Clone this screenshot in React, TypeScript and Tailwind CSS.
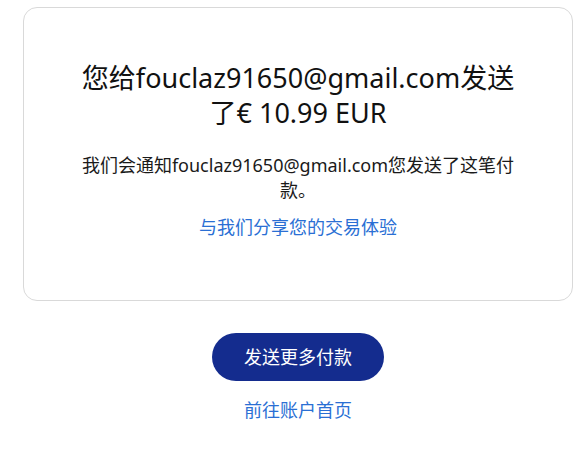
import React from "react";

const font = { fontFamily: '"Noto Sans", "Noto Sans CJK SC", sans-serif' };

export default function App() {
  return (
    <main className="bg-white min-h-screen w-[585px] h-[454px] overflow-hidden" style={font}>
      <div className="pl-[23px] pr-[12px] pt-[7px]">
        {/* confirmation card */}
        <section className="border border-[#d9d9d9] rounded-[14px] h-[294px] flex flex-col items-center pt-[52px] px-8">
          <h1 className="text-[27px] leading-[35px] text-[#111] text-center max-w-[440px]">
            您给fouclaz91650@gmail.com发送了€ 10.99 EUR
          </h1>
          <p className="mt-[23px] text-[18px] leading-[25px] text-[#1a1a1a] text-center max-w-[444px]">
            我们会通知fouclaz91650@gmail.com您发送了这笔付款。
          </p>
          <a href="#" className="mt-[12px] text-[18px] leading-[24px] text-[#2a6fd4]">
            与我们分享您的交易体验
          </a>
        </section>

        {/* actions */}
        <div className="flex flex-col items-center mt-[32px]">
          <button className="w-[172px] h-[48px] rounded-full bg-[#142c8e] text-white text-[18px]">
            发送更多付款
          </button>
          <a href="#" className="mt-[17px] text-[18px] leading-[24px] text-[#2a6fd4]">
            前往账户首页
          </a>
        </div>
      </div>
    </main>
  );
}
